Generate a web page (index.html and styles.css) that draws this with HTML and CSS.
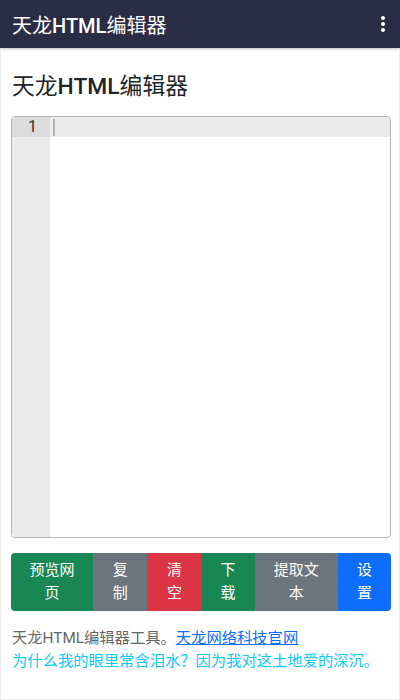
FILE: index.html
```html
<!DOCTYPE html>
<html lang="zh-CN">
<head>
    <meta charset="UTF-8">
    <meta name="viewport" content="width=device-width, initial-scale=1.0">
    <title>天龙HTML编辑器</title>
    <link rel="stylesheet" href="styles.css">
</head>
<body>
    <header class="app-bar">
        <span class="app-title">天龙<b>HTML</b>编辑器</span>
        <svg class="menu-icon" width="6" height="18" viewBox="0 0 6 18">
            <circle cx="3" cy="3" r="2" fill="#fff"/>
            <circle cx="3" cy="9" r="2" fill="#fff"/>
            <circle cx="3" cy="15" r="2" fill="#fff"/>
        </svg>
    </header>

    <main class="page">
        <h1 class="page-title">天龙<b>HTML</b>编辑器</h1>

        <div class="editor">
            <div class="gutter">
                <div class="line-no active">1</div>
            </div>
            <div class="code">
                <div class="code-line active"><span class="cursor"></span></div>
            </div>
        </div>

        <div class="btn-group">
            <button class="btn btn-green">预览网页</button>
            <button class="btn btn-gray">复制</button>
            <button class="btn btn-red">清空</button>
            <button class="btn btn-green">下载</button>
            <button class="btn btn-gray">提取文本</button>
            <button class="btn btn-blue">设置</button>
        </div>

        <p class="footer-text">
            天龙HTML编辑器工具。<a href="#" class="site-link">天龙网络科技官网</a><br>
            <span class="tagline">为什么我的眼里常含泪水？因为我对这土地爱的深沉。</span>
        </p>
    </main>
</body>
</html>
```

FILE: styles.css
```css
html, body {
    height: 100%;
}
body {
    margin: 0;
    background-color: #fff;
    font-family: Roboto, "Noto Sans CJK SC", sans-serif;
    color: #212529;
}
.app-bar {
    height: 48px;
    background-color: #2b2d46;
    display: flex;
    align-items: center;
    justify-content: space-between;
    padding: 0 14px 0 12px;
    box-shadow: 0 1px 3px rgba(0, 0, 0, 0.25);
    position: relative;
    z-index: 1;
}
.app-title {
    color: #fff;
    font-size: 20px;
    font-weight: 400;
}
.app-title b,
.page-title b {
    font-weight: 500;
}
.menu-icon {
    display: block;
}
.page {
    box-sizing: border-box;
    min-height: calc(100% - 48px);
    border-left: 1px solid #ececec;
    border-right: 1px solid #ececec;
    border-bottom: 1px solid #ececec;
    padding: 26px 8px 0 10px;
}
.page-title {
    margin: 0 0 16px 1px;
    font-size: 22.8px;
    font-weight: 400;
    line-height: 26px;
}
.editor {
    height: 420px;
    border: 1px solid #b5b5b5;
    border-radius: 4px;
    display: flex;
    overflow: hidden;
}
.gutter {
    width: 38px;
    background-color: #ebebeb;
}
.line-no {
    height: 20px;
    line-height: 20px;
    padding-right: 13px;
    text-align: right;
    font-size: 16px;
    color: #333;
}
.line-no.active {
    background-color: #dcdcdc;
}
.code {
    flex: 1;
}
.code-line {
    height: 20px;
    display: flex;
    align-items: center;
    padding-left: 3px;
}
.code-line.active {
    background-color: #ebebeb;
}
.cursor {
    width: 2px;
    height: 17px;
    background-color: #b0b0b0;
}
.btn-group {
    margin-top: 15px;
    display: grid;
    grid-template-columns: 82fr 54fr 54fr 53fr 83fr 53fr;
    border-radius: 4px;
    overflow: hidden;
}
.btn {
    border: none;
    margin: 0;
    padding: 6px 16px;
    font-family: inherit;
    font-size: 15px;
    line-height: 23px;
    color: #fff;
    text-align: center;
    cursor: pointer;
}
.btn-green {
    background-color: #198754;
}
.btn-gray {
    background-color: #6c757d;
}
.btn-red {
    background-color: #dc3545;
}
.btn-blue {
    background-color: #0d6efd;
}
.footer-text {
    margin: 16px 0 0 1px;
    font-size: 15.3px;
    line-height: 23px;
    color: #666;
}
.site-link {
    color: #0d6efd;
}
.tagline {
    color: #0dcaf0;
}
```
